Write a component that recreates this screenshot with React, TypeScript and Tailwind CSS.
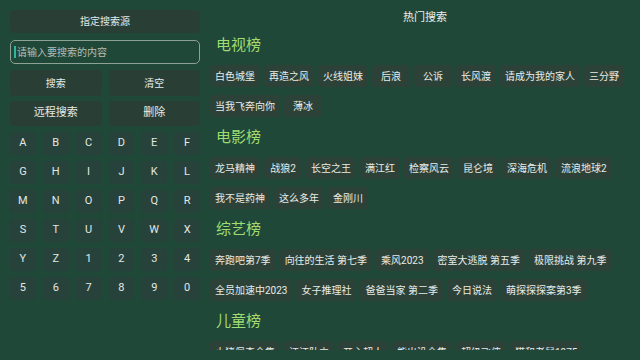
const sections: { title: string; items: string[] }[] = [
  {
    title: "电视榜",
    items: ["白色城堡", "再造之风", "火线姐妹", "后浪", "公诉", "长风渡", "请成为我的家人", "三分野", "当我飞奔向你", "薄冰"],
  },
  {
    title: "电影榜",
    items: ["龙马精神", "战狼2", "长空之王", "满江红", "检察风云", "昆仑境", "深海危机", "流浪地球2", "我不是药神", "这么多年", "金刚川"],
  },
  {
    title: "综艺榜",
    items: ["奔跑吧第7季", "向往的生活 第七季", "乘风2023", "密室大逃脱 第五季", "极限挑战 第九季", "全员加速中2023", "女子推理社", "爸爸当家 第二季", "今日说法", "萌探探探案第3季"],
  },
  {
    title: "儿童榜",
    items: ["小猪佩奇全集", "汪汪队立", "开心超人", "熊出没全集", "超级飞侠", "猫和老鼠1975"],
  },
];

const keys = "ABCDEFGHIJKLMNOPQRSTUVWXYZ1234567890".split("");

function PanelButton({ label, className }: { label: string; className?: string }) {
  return (
    <div
      className={`flex items-center justify-center rounded-[4px] bg-[#293f36] text-[#e6ebe8] ${className ?? ""}`}
    >
      {label}
    </div>
  );
}

export default function App() {
  return (
    <div
      className="flex w-[640px] h-[360px] overflow-hidden bg-[#1f4838] text-[#e6ebe8]"
      style={{ fontFamily: 'Roboto, "Noto Sans CJK SC", sans-serif' }}
    >
      {/* left: source + search box + keyboard */}
      <div className="ml-[10px] w-[190px] shrink-0 pt-[10px] flex flex-col">
        <PanelButton label="指定搜索源" className="h-[23px] text-[10px]" />
        <div className="mt-[7px] h-[24px] rounded-[5px] border border-[#8da295] flex items-center pl-[3px]">
          <span className="w-[2px] h-[12px] bg-[#2fb59c]" />
          <span className="ml-[1px] text-[10px] text-[#b4bdb8]">请输入要搜索的内容</span>
        </div>
        <div className="mt-[6px] grid grid-cols-2 gap-x-[7px]">
          <PanelButton label="搜索" className="h-[26px] text-[10px]" />
          <PanelButton label="清空" className="h-[26px] text-[10px]" />
        </div>
        <div className="mt-[5px] grid grid-cols-2 gap-x-[7px]">
          <PanelButton label="远程搜索" className="h-[25px] text-[11px]" />
          <PanelButton label="删除" className="h-[25px] text-[11px]" />
        </div>
        <div className="mt-[6px] grid grid-cols-6 gap-x-[7px] gap-y-[6px]">
          {keys.map((k) => (
            <div
              key={k}
              className="h-[23px] rounded-[4px] bg-[#27423a] flex items-center justify-center text-[11px] text-[#e3e8e5]"
            >
              {k}
            </div>
          ))}
        </div>
      </div>

      {/* right: hot searches (scroll area ends 10px above the bottom) */}
      <div className="flex-1 h-[350px] overflow-hidden pl-[10px] pt-[10px]">
        <div className="h-[15px] leading-[15px] text-center text-[11px] text-[#eef1ef]">热门搜索</div>
        {sections.map((s) => (
          <div key={s.title} className="mt-[10px]">
            <div className="h-[20px] leading-[20px] pl-[6px] text-[15px] text-[#9fdc72]">{s.title}</div>
            <div className="mt-[10px] flex flex-wrap gap-x-[4px] gap-y-[8px]">
              {s.items.map((it) => (
                <div
                  key={it}
                  className="h-[22px] min-w-[38px] px-[5px] rounded-[4px] bg-[#2c4238] flex items-center justify-center text-[10px] whitespace-pre text-[#e8ece9]"
                >
                  {it}
                </div>
              ))}
            </div>
          </div>
        ))}
      </div>
    </div>
  );
}
